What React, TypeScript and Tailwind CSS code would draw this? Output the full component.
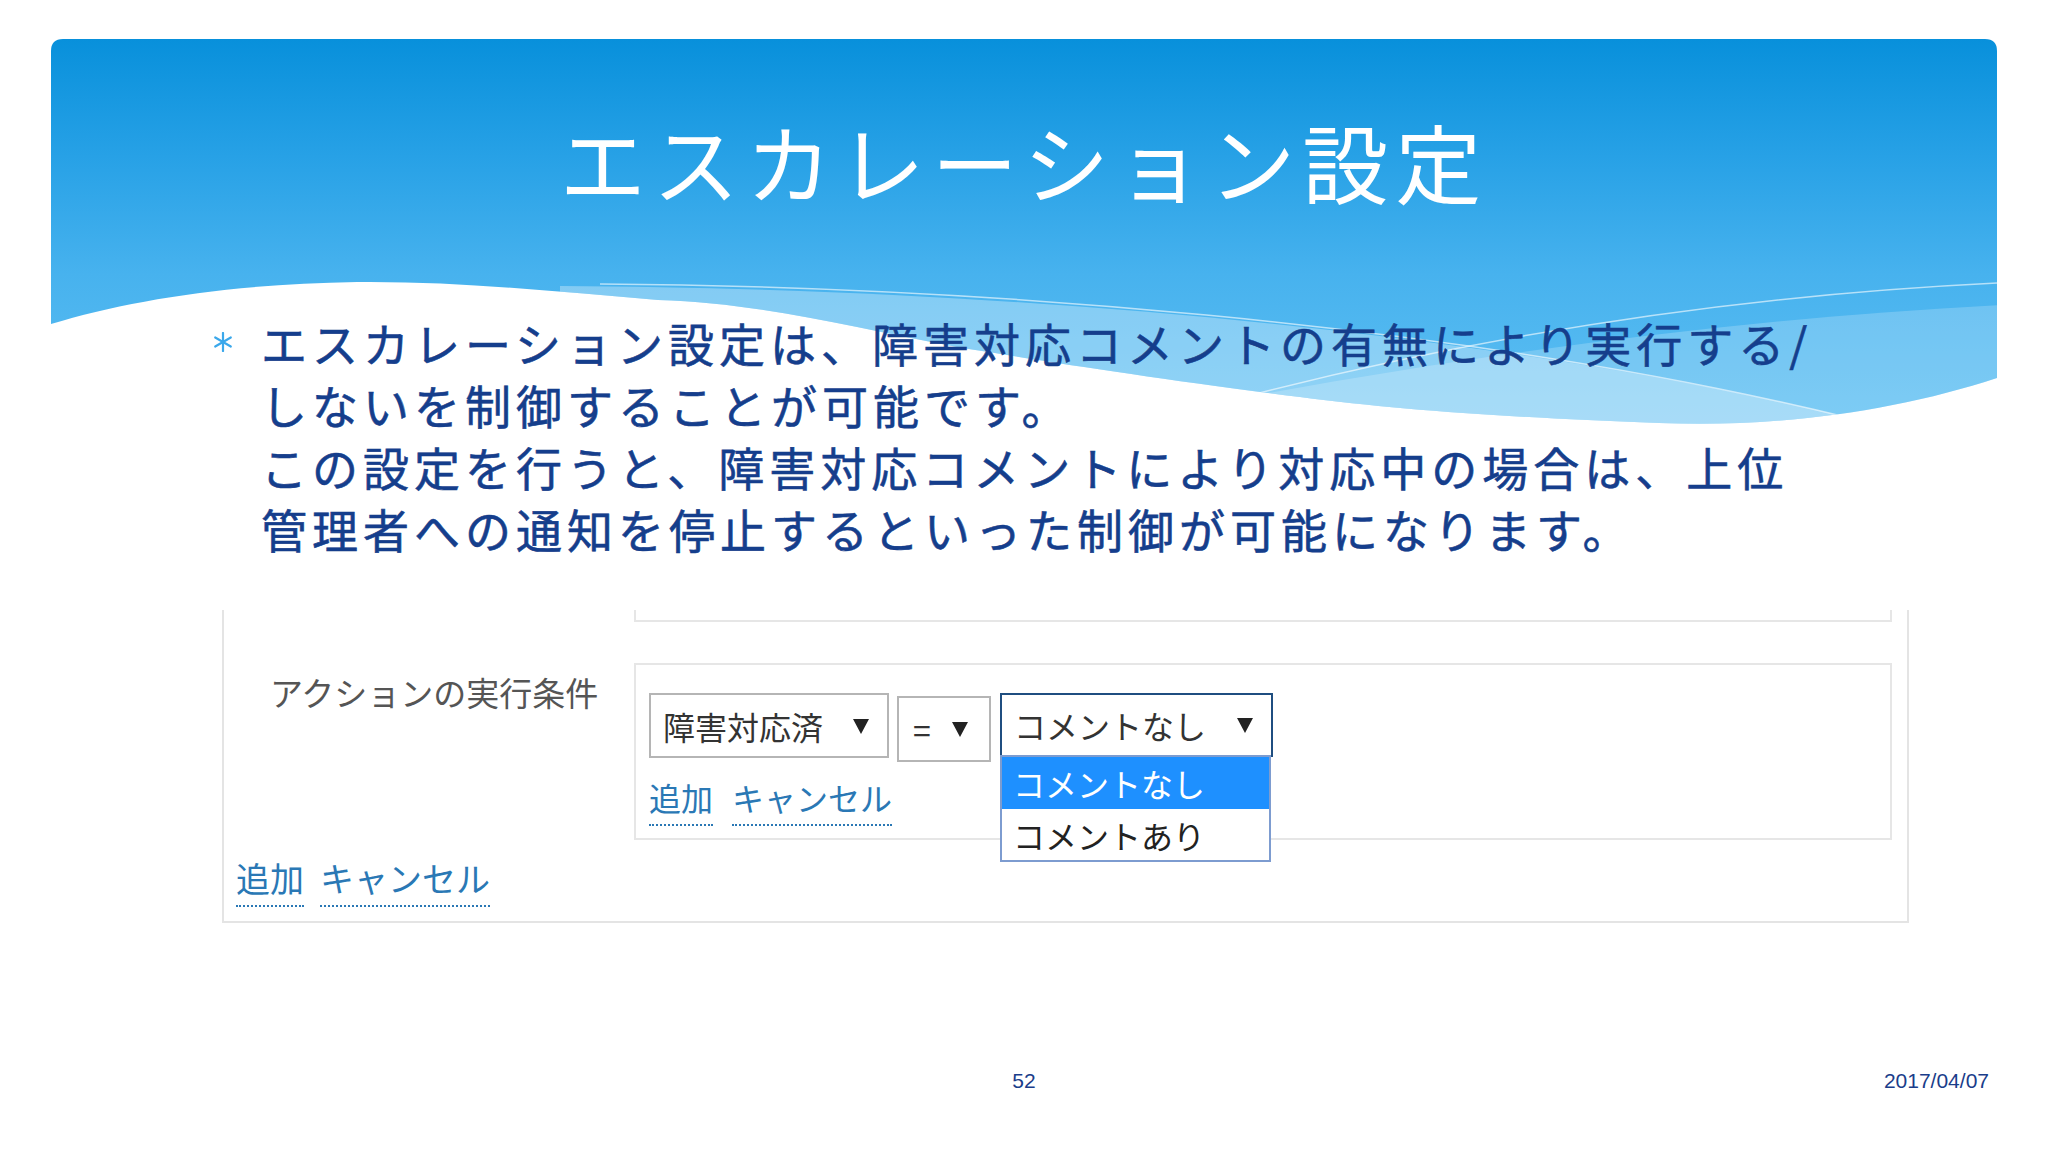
import React from 'react';

const jp = "font-['Noto_Sans_CJK_JP',sans-serif]";

const headerPath =
  'M 51 324 L 51 51 Q 51 39 63 39 L 1985 39 Q 1997 39 1997 51 L 1997 378 ' +
  'C 1900 410, 1780 428, 1659 423 C 1500 417, 1400 410, 1300 397 ' +
  'C 1150 378, 1050 362, 957 347 C 850 327, 760 303, 658 300 ' +
  'C 560 292, 460 281, 357 282 C 230 284, 130 300, 51 324 Z';

const HeaderArt: React.FC = () => (
  <svg className="absolute left-0 top-0" width="2048" height="460" viewBox="0 0 2048 460">
    <defs>
      <linearGradient id="hg" x1="0" y1="39" x2="0" y2="430" gradientUnits="userSpaceOnUse">
        <stop offset="0" stopColor="#0890db" />
        <stop offset="0.3" stopColor="#27a1e6" />
        <stop offset="0.6" stopColor="#47b2ee" />
        <stop offset="1" stopColor="#5fc0f3" />
      </linearGradient>
      <clipPath id="hc">
        <path d={headerPath} />
      </clipPath>
    </defs>
    <path d={headerPath} fill="url(#hg)" />
    <g clipPath="url(#hc)">
      <path d="M 560 286 C 950 288, 1450 322, 1850 418 L 2000 460 L 560 460 Z" fill="#ffffff" fillOpacity="0.32" />
      <path d="M 1230 400 C 1500 350, 1750 318, 2000 305 L 2000 460 L 1230 460 Z" fill="#ffffff" fillOpacity="0.2" />
      <path d="M 600 284 C 950 286, 1450 320, 1850 418" stroke="#ffffff" strokeOpacity="0.6" strokeWidth="1.5" fill="none" />
      <path d="M 1240 398 C 1500 330, 1750 295, 1997 283" stroke="#ffffff" strokeOpacity="0.6" strokeWidth="1.5" fill="none" />
    </g>
  </svg>
);

const Arrow: React.FC = () => (
  <svg width="18" height="18" viewBox="0 0 18 18">
    <path d="M1 2h16L9 17z" fill="#222222" />
  </svg>
);

const Links: React.FC<{ big?: boolean }> = ({ big }) => (
  <div className={`flex ${big ? 'gap-[16px] text-[34px]' : 'gap-[19px] text-[32px]'} leading-none text-[#2a78b5]`}>
    <span className={`border-b-2 border-dotted border-[#2a78b5] ${big ? 'pb-[10px]' : 'pb-[11px]'}`}>追加</span>
    <span className={`border-b-2 border-dotted border-[#2a78b5] ${big ? 'pb-[10px]' : 'pb-[11px]'}`}>キャンセル</span>
  </div>
);

export default function App() {
  return (
    <div className={`relative w-[2048px] h-[1152px] overflow-hidden bg-white ${jp}`}>
      <HeaderArt />
      <div className="relative flex flex-col">
        <h1 className="pt-[118px] text-center text-[86px] leading-none tracking-[7px] font-normal text-white">
          エスカレーション設定
        </h1>

        <div className="mt-[107px] ml-[213px] flex">
          <div className="w-[48px] h-[62px] flex items-center">
            <svg width="20" height="20" viewBox="0 0 20 20">
              <g stroke="#3ba8eb" strokeWidth="2.2" strokeLinecap="round">
                <line x1="10" y1="1" x2="10" y2="19" />
                <line x1="2.2" y1="5.5" x2="17.8" y2="14.5" />
                <line x1="2.2" y1="14.5" x2="17.8" y2="5.5" />
              </g>
            </svg>
          </div>
          <p className="text-[46px] leading-[62px] tracking-[5px] font-normal text-[#153e8c] [-webkit-text-stroke:0.6px_#153e8c] whitespace-nowrap">
            エスカレーション設定は、障害対応コメントの有無により実行する/
            <br />
            しないを制御することが可能です。
            <br />
            この設定を行うと、障害対応コメントにより対応中の場合は、上位
            <br />
            管理者への通知を停止するといった制御が可能になります。
          </p>
        </div>

        <div className="mt-[51px] ml-[222px] w-[1687px] border-2 border-t-0 border-[#e4e4e4]">
          <div className="ml-[410px] w-[1258px] h-[12px] border-2 border-t-0 border-[#e6e6e6]" />
          <div className="mt-[41px] flex">
            <div className="w-[410px] pl-[46px] pt-[13px] text-[33px] leading-none text-[#555555]">
              アクションの実行条件
            </div>
            <div className="w-[1258px] border-2 border-[#e6e6e6] pt-[28px] pl-[13px] pb-[12px]">
              <div className="flex items-start text-[32px] leading-none text-[#333333]">
                <div className="w-[240px] h-[65px] border-2 border-[#b5b5b5] flex items-center justify-between pl-[12px] pr-[17px]">
                  <span>障害対応済</span>
                  <Arrow />
                </div>
                <div className="ml-[8px] mt-[3px] w-[94px] h-[66px] border-2 border-[#b5b5b5] flex items-center justify-between pl-[14px] pr-[20px]">
                  <span>=</span>
                  <Arrow />
                </div>
                <div className="relative ml-[9px] w-[273px] h-[64px]">
                  <div className="w-full h-full border-2 border-[#1f4e80] flex items-center justify-between pl-[12px] pr-[17px]">
                    <span>コメントなし</span>
                    <Arrow />
                  </div>
                  <div className="absolute left-0 top-[62px] w-[271px] border-2 border-[#7d9cd0] bg-white">
                    <div className="h-[52px] bg-[#1e90ff] text-white flex items-center pl-[11px]">コメントなし</div>
                    <div className="h-[51px] text-[#222222] flex items-center pl-[11px]">コメントあり</div>
                  </div>
                </div>
              </div>
              <div className="mt-[19px]">
                <Links />
              </div>
            </div>
          </div>
          <div className="mt-[21px] pl-[12px] pb-[14px]">
            <Links big />
          </div>
        </div>

        <div className="mt-[146px] ml-[51px] w-[1946px] grid grid-cols-3 font-['Liberation_Sans',Arial,sans-serif] text-[21px] leading-[24px] text-[#1a3d8a]">
          <div />
          <div className="text-center">52</div>
          <div className="text-right pr-[8px]">2017/04/07</div>
        </div>
      </div>
    </div>
  );
}
